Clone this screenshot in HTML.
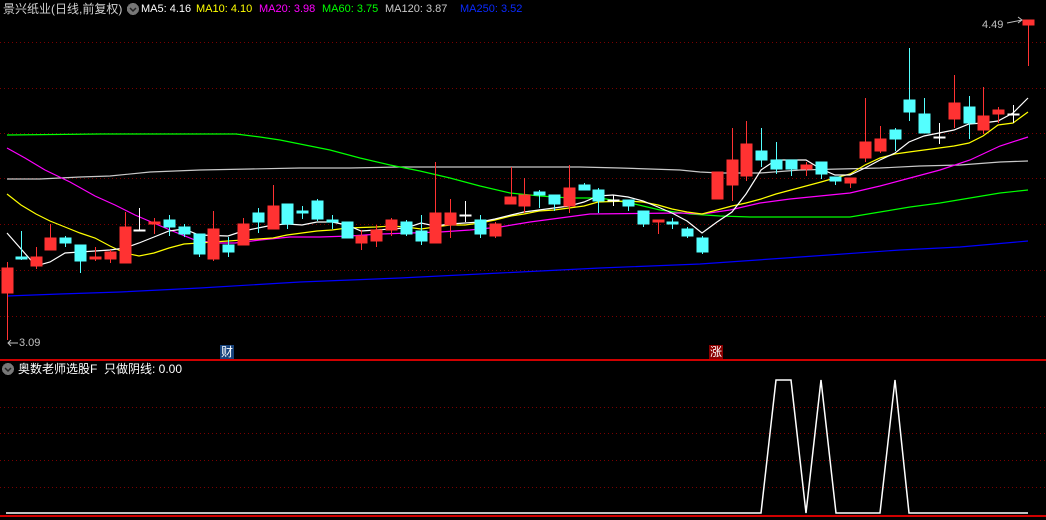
<!DOCTYPE html>
<html><head><meta charset="utf-8"><style>
html,body{margin:0;padding:0;background:#000;width:1046px;height:520px;overflow:hidden}
.t{position:absolute;font:12px "Liberation Sans","Noto Sans CJK SC",sans-serif;white-space:nowrap;line-height:14px}
.m{font-size:11px}
</style></head><body>
<svg width="1046" height="520" style="position:absolute;left:0;top:0" shape-rendering="crispEdges">
<g stroke="#7a0000" stroke-dasharray="1 3" stroke-width="1">
<line x1="0" y1="42.5" x2="1046" y2="42.5"/><line x1="0" y1="88.5" x2="1046" y2="88.5"/><line x1="0" y1="133.5" x2="1046" y2="133.5"/><line x1="0" y1="178.5" x2="1046" y2="178.5"/><line x1="0" y1="224.5" x2="1046" y2="224.5"/><line x1="0" y1="270.5" x2="1046" y2="270.5"/><line x1="0" y1="316.5" x2="1046" y2="316.5"/>
<line x1="0" y1="407.5" x2="1046" y2="407.5"/><line x1="0" y1="433.5" x2="1046" y2="433.5"/><line x1="0" y1="460.5" x2="1046" y2="460.5"/><line x1="0" y1="487.5" x2="1046" y2="487.5"/>
</g>
<line x1="0" y1="360" x2="1046" y2="360" stroke="#d00000" stroke-width="2"/>
<line x1="0" y1="516" x2="1046" y2="516" stroke="#d00000" stroke-width="2"/>
<g fill="none" stroke-width="1.2" shape-rendering="auto">
<polyline stroke="#0000ff" points="7,296 60,294 120,292 200,288 300,282 400,278 500,273 600,268 700,264 800,257 900,250 960,247 1028,241"/>
<polyline stroke="#c8c8c8" points="7,179 40,179 80,177 110,176 150,172 200,170 250,169 300,168 350,168 400,167 500,167 580,167 620,168 650,169 680,170 700,172 720,173 760,173 800,170 840,169 880,168 920,166 960,165 1000,162 1028,161"/>
<polyline stroke="#00ff00" points="7,135 100,134 236,134 260,137 280,140 300,144 330,150 360,158 390,165 420,171 450,178 480,186 510,193 540,196 570,198 600,198 630,203 660,210 690,214 720,216 750,217 850,217 880,212 910,207 940,203 970,198 1000,193 1028,190"/>
<polyline stroke="#ff00ff" points="7,148 25,158 45,170 70,182 95,196 115,205 135,215 170,230 195,240 215,243 235,243 260,240 290,237 320,237 350,236 380,234 410,233 440,232 470,230 500,227 530,222 560,218 590,214 680,213 702,214 730,210 760,203 790,199 820,196 850,193 880,186 910,178 940,170 970,160 1000,146 1028,137"/>
<polyline stroke="#ffff00" points="7,194 21,205 36,214 50,221 65,227 80,233 95,238 110,246 125,253 139,256 154,253 169,248 184,244 199,243 228,241 258,239 273,238 287,235 302,233 317,231 332,230 347,228 376,227 391,226 406,227 421,229 435,227 450,225 465,225 480,223 495,220 511,216 524,214 539,211 554,210 569,208 584,206 598,202 628,201 643,202 658,205 672,209 687,212 702,214 717,210 732,206 746,203 761,199 776,194 791,190 806,186 821,182 835,178 850,174 865,165 880,158 895,154 909,152 939,148 954,146 969,143 983,136 998,125 1013,123 1028,112"/>
<polyline stroke="#ffffff" points="7,233 36,266 50,262 65,253 95,251 110,250 125,248 139,243 154,237 169,231 184,229 199,235 228,236 243,231 258,228 273,225 287,224 302,225 317,222 332,222 347,225 361,231 376,230 391,229 406,228 421,223 435,226 450,224 465,223 480,222 495,219 511,215 524,212 539,210 554,208 569,206 584,202 598,196 613,195 628,197 643,201 658,207 672,213 687,221 702,233 717,222 732,212 746,194 761,170 776,160 806,160 821,169 835,175 850,175 865,168 880,160 895,153 909,142 924,136 939,133 954,130 969,124 983,123 998,121 1013,113 1028,98"/>
</g>
<g>
<g stroke="#ff3232" fill="#ff3232">
<line x1="7.5" y1="262" x2="7.5" y2="340"/><rect x="2" y="268" width="11" height="25"/>
<line x1="36.5" y1="247" x2="36.5" y2="269"/><rect x="31" y="257" width="11" height="9"/>
<line x1="50.5" y1="224" x2="50.5" y2="250"/><rect x="45" y="238" width="11" height="12"/>
<line x1="95.5" y1="247" x2="95.5" y2="261"/><rect x="90" y="257" width="11" height="2"/>
<line x1="110.5" y1="250" x2="110.5" y2="263"/><rect x="105" y="252" width="11" height="7"/>
<line x1="125.5" y1="212" x2="125.5" y2="263"/><rect x="120" y="227" width="11" height="36"/>
<line x1="154.5" y1="218" x2="154.5" y2="234"/><rect x="149" y="222" width="11" height="2"/>
<line x1="213.5" y1="211" x2="213.5" y2="261"/><rect x="208" y="229" width="11" height="30"/>
<line x1="243.5" y1="218" x2="243.5" y2="245"/><rect x="238" y="224" width="11" height="21"/>
<line x1="273.5" y1="185" x2="273.5" y2="229"/><rect x="268" y="206" width="11" height="23"/>
<line x1="361.5" y1="230" x2="361.5" y2="250"/><rect x="356" y="236" width="11" height="7"/>
<line x1="376.5" y1="225" x2="376.5" y2="247"/><rect x="371" y="230" width="11" height="11"/>
<line x1="391.5" y1="218" x2="391.5" y2="236"/><rect x="386" y="220" width="11" height="10"/>
<line x1="435.5" y1="162" x2="435.5" y2="243"/><rect x="430" y="213" width="11" height="30"/>
<line x1="450.5" y1="199" x2="450.5" y2="238"/><rect x="445" y="213" width="11" height="12"/>
<line x1="495.5" y1="222" x2="495.5" y2="238"/><rect x="490" y="224" width="11" height="12"/>
<line x1="511.5" y1="167" x2="511.5" y2="204"/><rect x="505" y="197" width="11" height="7"/>
<line x1="524.5" y1="178" x2="524.5" y2="213"/><rect x="519" y="195" width="11" height="11"/>
<line x1="569.5" y1="165" x2="569.5" y2="213"/><rect x="564" y="188" width="11" height="18"/>
<line x1="658.5" y1="220" x2="658.5" y2="234"/><rect x="653" y="220" width="11" height="2"/>
<line x1="717.5" y1="172" x2="717.5" y2="199"/><rect x="712" y="172" width="11" height="27"/>
<line x1="732.5" y1="128" x2="732.5" y2="201"/><rect x="727" y="160" width="11" height="25"/>
<line x1="746.5" y1="121" x2="746.5" y2="181"/><rect x="741" y="144" width="11" height="32"/>
<line x1="806.5" y1="162" x2="806.5" y2="176"/><rect x="801" y="165" width="11" height="4"/>
<line x1="850.5" y1="178" x2="850.5" y2="188"/><rect x="845" y="178" width="11" height="5"/>
<line x1="865.5" y1="98" x2="865.5" y2="162"/><rect x="860" y="142" width="11" height="16"/>
<line x1="880.5" y1="126" x2="880.5" y2="153"/><rect x="875" y="139" width="11" height="12"/>
<line x1="954.5" y1="75" x2="954.5" y2="128"/><rect x="949" y="103" width="11" height="16"/>
<line x1="983.5" y1="87" x2="983.5" y2="134"/><rect x="978" y="116" width="11" height="14"/>
<line x1="998.5" y1="107" x2="998.5" y2="123"/><rect x="993" y="110" width="11" height="4"/>
<line x1="1028.5" y1="20" x2="1028.5" y2="66"/><rect x="1023" y="20" width="11" height="5"/>
</g>
<g stroke="#54ffff" fill="#54ffff">
<line x1="21.5" y1="231" x2="21.5" y2="260"/><rect x="16" y="257" width="11" height="2"/>
<line x1="65.5" y1="236" x2="65.5" y2="247"/><rect x="60" y="238" width="11" height="5"/>
<line x1="80.5" y1="245" x2="80.5" y2="273"/><rect x="75" y="245" width="11" height="16"/>
<line x1="169.5" y1="215" x2="169.5" y2="236"/><rect x="164" y="220" width="11" height="7"/>
<line x1="184.5" y1="224" x2="184.5" y2="237"/><rect x="179" y="227" width="11" height="7"/>
<line x1="199.5" y1="234" x2="199.5" y2="257"/><rect x="194" y="234" width="11" height="20"/>
<line x1="228.5" y1="237" x2="228.5" y2="257"/><rect x="223" y="245" width="11" height="7"/>
<line x1="258.5" y1="208" x2="258.5" y2="233"/><rect x="253" y="213" width="11" height="9"/>
<line x1="287.5" y1="204" x2="287.5" y2="229"/><rect x="282" y="204" width="11" height="20"/>
<line x1="302.5" y1="206" x2="302.5" y2="219"/><rect x="297" y="211" width="11" height="2"/>
<line x1="317.5" y1="199" x2="317.5" y2="221"/><rect x="312" y="201" width="11" height="18"/>
<line x1="332.5" y1="215" x2="332.5" y2="229"/><rect x="327" y="220" width="11" height="2"/>
<line x1="347.5" y1="222" x2="347.5" y2="238"/><rect x="342" y="222" width="11" height="16"/>
<line x1="406.5" y1="220" x2="406.5" y2="236"/><rect x="401" y="222" width="11" height="12"/>
<line x1="421.5" y1="215" x2="421.5" y2="245"/><rect x="416" y="231" width="11" height="10"/>
<line x1="480.5" y1="215" x2="480.5" y2="238"/><rect x="475" y="220" width="11" height="14"/>
<line x1="539.5" y1="190" x2="539.5" y2="208"/><rect x="534" y="192" width="11" height="3"/>
<line x1="554.5" y1="195" x2="554.5" y2="211"/><rect x="549" y="195" width="11" height="9"/>
<line x1="584.5" y1="183" x2="584.5" y2="190"/><rect x="579" y="185" width="11" height="5"/>
<line x1="598.5" y1="188" x2="598.5" y2="213"/><rect x="593" y="190" width="11" height="11"/>
<line x1="628.5" y1="200" x2="628.5" y2="211"/><rect x="623" y="200" width="11" height="6"/>
<line x1="643.5" y1="211" x2="643.5" y2="227"/><rect x="638" y="211" width="11" height="13"/>
<line x1="672.5" y1="218" x2="672.5" y2="229"/><rect x="667" y="222" width="11" height="2"/>
<line x1="687.5" y1="227" x2="687.5" y2="238"/><rect x="682" y="229" width="11" height="7"/>
<line x1="702.5" y1="236" x2="702.5" y2="254"/><rect x="697" y="238" width="11" height="14"/>
<line x1="761.5" y1="128" x2="761.5" y2="167"/><rect x="756" y="151" width="11" height="9"/>
<line x1="776.5" y1="142" x2="776.5" y2="174"/><rect x="771" y="160" width="11" height="9"/>
<line x1="791.5" y1="160" x2="791.5" y2="176"/><rect x="786" y="160" width="11" height="9"/>
<line x1="821.5" y1="162" x2="821.5" y2="179"/><rect x="816" y="162" width="11" height="12"/>
<line x1="835.5" y1="177" x2="835.5" y2="185"/><rect x="830" y="177" width="11" height="4"/>
<line x1="895.5" y1="128" x2="895.5" y2="151"/><rect x="890" y="130" width="11" height="9"/>
<line x1="909.5" y1="48" x2="909.5" y2="121"/><rect x="904" y="100" width="11" height="12"/>
<line x1="924.5" y1="98" x2="924.5" y2="133"/><rect x="919" y="114" width="11" height="19"/>
<line x1="969.5" y1="96" x2="969.5" y2="139"/><rect x="964" y="107" width="11" height="16"/>
</g>
<g stroke="#ffffff" fill="#ffffff">
<line x1="139.5" y1="208" x2="139.5" y2="231"/><rect x="134" y="230" width="11" height="1"/>
<line x1="465.5" y1="201" x2="465.5" y2="222"/><rect x="460" y="215" width="11" height="1"/>
<line x1="613.5" y1="195" x2="613.5" y2="206"/><rect x="608" y="200" width="11" height="1"/>
<line x1="939.5" y1="123" x2="939.5" y2="144"/><rect x="934" y="137" width="11" height="1"/>
<line x1="1013.5" y1="105" x2="1013.5" y2="123"/><rect x="1008" y="114" width="11" height="1"/>
</g>
</g>
<line x1="1007" y1="23" x2="1022" y2="20" stroke="#c0c0c0" shape-rendering="auto"/>
<polyline points="1018,17 1022,20 1018,23" fill="none" stroke="#c0c0c0" shape-rendering="auto"/>
<line x1="8" y1="343" x2="18" y2="343" stroke="#c0c0c0"/>
<polyline points="11,340 8,343 11,346" fill="none" stroke="#c0c0c0" shape-rendering="auto"/>
<polyline fill="none" stroke="#ffffff" stroke-width="1.5" shape-rendering="auto" points="6,513 761,513 776,380 791,380 806,513 821,380 836,513 880,513 895,380 909,513 1028,513"/>
<rect x="220" y="345" width="14" height="14" fill="#17427a"/>
<rect x="709" y="345" width="14" height="14" fill="#8a0000"/>
<circle cx="133" cy="9" r="6" fill="#777"/>
<polyline points="130,8 133,11 136,8" fill="none" stroke="#222" stroke-width="1.5" shape-rendering="auto"/>
<circle cx="8" cy="369" r="6" fill="#777"/>
<polyline points="5,368 8,371 11,368" fill="none" stroke="#222" stroke-width="1.5" shape-rendering="auto"/>
</svg>
<div class="t" style="left:3px;top:2px;color:#d0d0d0">景兴纸业(日线,前复权)</div>
<div class="t m" style="left:141px;top:2px;color:#fff">MA5: 4.16</div>
<div class="t m" style="left:196px;top:2px;color:#ffff00">MA10: 4.10</div>
<div class="t m" style="left:259px;top:2px;color:#ff00ff">MA20: 3.98</div>
<div class="t m" style="left:322px;top:2px;color:#00ff00">MA60: 3.75</div>
<div class="t m" style="left:385px;top:2px;color:#c8c8c8">MA120: 3.87</div>
<div class="t m" style="left:460px;top:2px;color:#0a2aff">MA250: 3.52</div>
<div class="t m" style="left:982px;top:18px;color:#c0c0c0">4.49</div>
<div class="t m" style="left:19px;top:336px;color:#c0c0c0">3.09</div>
<div class="t" style="left:221px;top:345px;color:#fff">财</div>
<div class="t" style="left:710px;top:345px;color:#fff">涨</div>
<div class="t" style="left:18px;top:362px;color:#fff">奥数老师选股F&nbsp; 只做阴线: 0.00</div>
</body></html>
